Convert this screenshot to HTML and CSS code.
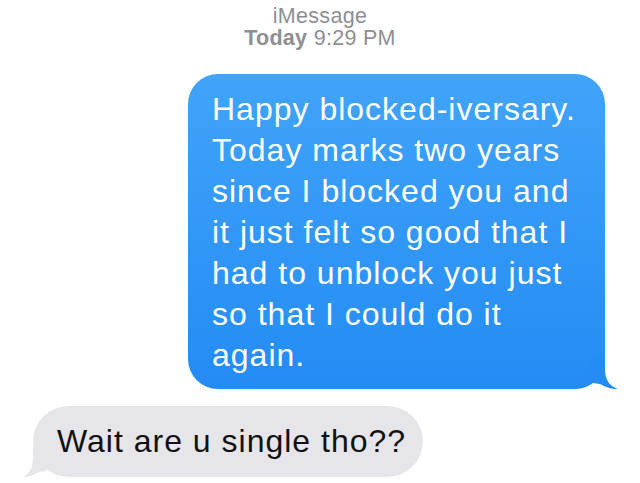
FILE: index.html
```html
<!doctype html>
<html>
<head>
<meta charset="utf-8">
<title>iMessage</title>
<link rel="stylesheet" href="styles.css">
</head>

<body>
	<div class="head">
		<p>iMessage</p>
		<p><b>Today</b> 9:29 PM</p>
	</div>
	<div class="thread">
		<div class="msg out">Happy blocked-iversary.<br>Today marks two years<br>since I blocked you and<br>it just felt so good that I<br>had to unblock you just<br>so that I could do it<br>again.
			<svg class="tail" width="30" height="30" viewBox="0 0 30 30"><path d="M0,0 H17 V10 C17,20 21,27 30,30 C24,30.5 17,28 12,25 L5,24 L0,0 Z" fill="#238bf4"/></svg>
		</div>
		<div class="msg in">Wait are u single tho??
			<svg class="tail" width="30" height="30" viewBox="0 0 30 30"><path d="M30,0 H10 V10 C10,20 7,27 0,30 C5,30.5 11,28 16,25 L23,24 L30,0 Z" fill="#e5e5ea"/></svg>
		</div>
	</div>
</body>
</html>
```

FILE: styles.css
```css
*{ margin:0; padding:0; box-sizing:border-box; }
body{ background:#fff; font-family:"Liberation Sans", Arial, sans-serif; overflow:hidden; }
.head{ padding-top:5px; text-align:center; font-size:21.5px; line-height:22px; color:#8e8e93; letter-spacing:0.3px; }
.head b{ font-weight:bold; }
.thread{ display:flex; flex-direction:column; gap:17px; padding-top:25px; }
.msg{ position:relative; font-size:32px; line-height:41px; letter-spacing:1px; white-space:nowrap; }
.tail{ position:absolute; bottom:0; display:block; }
.out{ margin-left:188px; width:417px; padding:15px 20px 13px 24px; border-radius:30px; color:#fff; background:linear-gradient(#41a4f9, #238bf4); }
.out .tail{ right:-13px; }
.in{ margin-left:33px; width:390px; padding:15px 22px 15px 24px; border-radius:36px; color:#111; background:#e5e5ea; }
.in .tail{ left:-10px; }
```
